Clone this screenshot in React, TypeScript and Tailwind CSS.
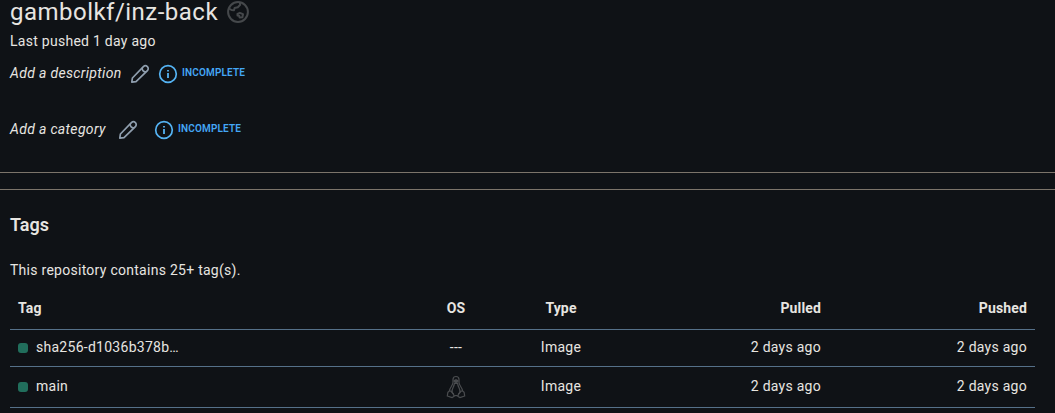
import type { ReactNode } from "react";

function PencilIcon() {
  return (
    <svg className="size-5 shrink-0" viewBox="0 0 20 20" fill="none" stroke="#8f9eae" strokeWidth="1.7" strokeLinejoin="round">
      <path d="M1.8 18.2 2.4 14 13.4 2.6a2.8 2.8 0 0 1 4 4L6 17.6Z" />
      <path d="M12.2 3.9a3.4 3.4 0 0 0 3.9 3.9" />
    </svg>
  );
}

function InfoIcon() {
  return (
    <svg className="size-5 shrink-0" viewBox="0 0 20 20" fill="none" stroke="#55b3f3" strokeWidth="1.7">
      <circle cx="10" cy="10" r="8.3" />
      <path d="M10 9v5M10 6v1.6" strokeWidth="1.8" />
    </svg>
  );
}

function GlobeIcon() {
  return (
    <svg className="size-6 shrink-0" viewBox="0 0 24 24" fill="none" stroke="#45484b" strokeWidth="2" strokeLinejoin="round">
      <circle cx="12" cy="12" r="9.9" />
      <path d="M3 8.5 5.5 10 8 10.2 8.6 8 11.8 7.2 14.2 4.8 13.8 2.2" />
      <path d="M11.5 13.8 13.8 12.8 17 14.2 16.4 17.2 13.6 17.6 13.2 15.8 11.5 15.5Z" />
    </svg>
  );
}

function PenguinIcon() {
  return (
    <svg className="h-6 w-5" viewBox="0 0 20 24" fill="none" stroke="#4a4c4f" strokeWidth="1.2" strokeLinejoin="round">
      <path d="M3.4 16C3.6 12.5 7 10.5 7 7.6V4.4C7 2.6 8.3 1.5 10 1.5s3 1.1 3 2.9v3.2c0 2.9 3.4 4.9 3.6 8.4" />
      <path d="M8.2 5.6 10 4.7l1.8.9v1L10 7.5l-1.8-.9Z" fill="#4a4c4f" />
      <path d="M7.6 19.2C5.6 17.6 6 14.7 7 12.7c.7-1.4 1.3-2.8 1.4-4.3h3.2c.1 1.5.7 2.9 1.4 4.3 1 2 1.4 4.9-.6 6.5" />
      <path d="M3.4 16 1.9 17.2 1.3 21l4.9 1.6 2-1.4-.8-2.2-2.6-3Z" />
      <path d="m16.6 16 1.5 1.2.6 3.8-4.9 1.6-2-1.4.8-2.2 2.6-3Z" />
      <path d="M8.2 20.6h3.6" />
    </svg>
  );
}

function Incomplete() {
  return (
    <>
      <InfoIcon />
      <span className="relative -top-px ml-1 text-[10px] font-semibold tracking-[0.16px] text-[#44a7f5]">INCOMPLETE</span>
    </>
  );
}

function TagName({ children }: { children: ReactNode }) {
  return (
    <span className="flex items-center pl-2">
      <span className="relative top-px mr-2 size-2.5 rounded-[3px] bg-[#216e5c]" />
      {children}
    </span>
  );
}

const columns = "grid grid-cols-[410px_72px_138px_199px_206px] items-center border-b border-[#557089]";

export default function App() {
  return (
    <main className="h-[413px] overflow-hidden bg-[#0f1216] font-[Roboto,sans-serif] text-sm font-[450] tracking-[0.27px] text-[#e7e5e1]">
      <header className="flex h-6 items-center pl-2.5">
        <h1 className="w-[208px] text-2xl leading-6 font-[430] tracking-[0.48px] whitespace-nowrap">gambolkf/inz-back</h1>
        <span className="ml-2"><GlobeIcon /></span>
      </header>
      <p className="flex h-[34px] items-center pl-2.5">Last pushed 1 day ago</p>
      <div className="flex h-8 items-center pl-2.5">
        <em className="w-[120px] -translate-y-px tracking-[0.33px]">Add a description</em>
        <PencilIcon />
        <span className="ml-2 flex items-center"><Incomplete /></span>
      </div>
      <div className="mt-6 flex h-8 items-center pl-2.5">
        <em className="w-[108px] -translate-y-px tracking-[0.33px]">Add a category</em>
        <PencilIcon />
        <span className="ml-4 flex items-center"><Incomplete /></span>
      </div>
      <div className="mt-[26px] h-[18px] border-y border-[#7c746a]" />
      <section className="pl-2.5">
        <h2 className="pt-[21px] text-lg leading-7 font-semibold tracking-[0px]">Tags</h2>
        <p className="mt-[19px] leading-6">This repository contains 25+ tag(s).</p>
        <div className="w-[1025px]">
          <div className={`${columns} h-12 pt-[5px] font-bold tracking-[0.15px]`}>
            <span className="pl-2">Tag</span>
            <span className="text-center">OS</span>
            <span className="text-center">Type</span>
            <span className="pr-2 text-right">Pulled</span>
            <span className="pr-2 text-right">Pushed</span>
          </div>
          <div className={`${columns} h-[37px] pb-0.5`}>
            <TagName>sha256-d1036b378b…</TagName>
            <span className="text-center">---</span>
            <span className="text-center">Image</span>
            <span className="pr-2 text-right">2 days ago</span>
            <span className="pr-2 text-right">2 days ago</span>
          </div>
          <div className={`${columns} h-[41px] pb-0.5`}>
            <TagName>main</TagName>
            <span className="relative top-px flex justify-center"><PenguinIcon /></span>
            <span className="text-center">Image</span>
            <span className="pr-2 text-right">2 days ago</span>
            <span className="pr-2 text-right">2 days ago</span>
          </div>
        </div>
      </section>
    </main>
  );
}
